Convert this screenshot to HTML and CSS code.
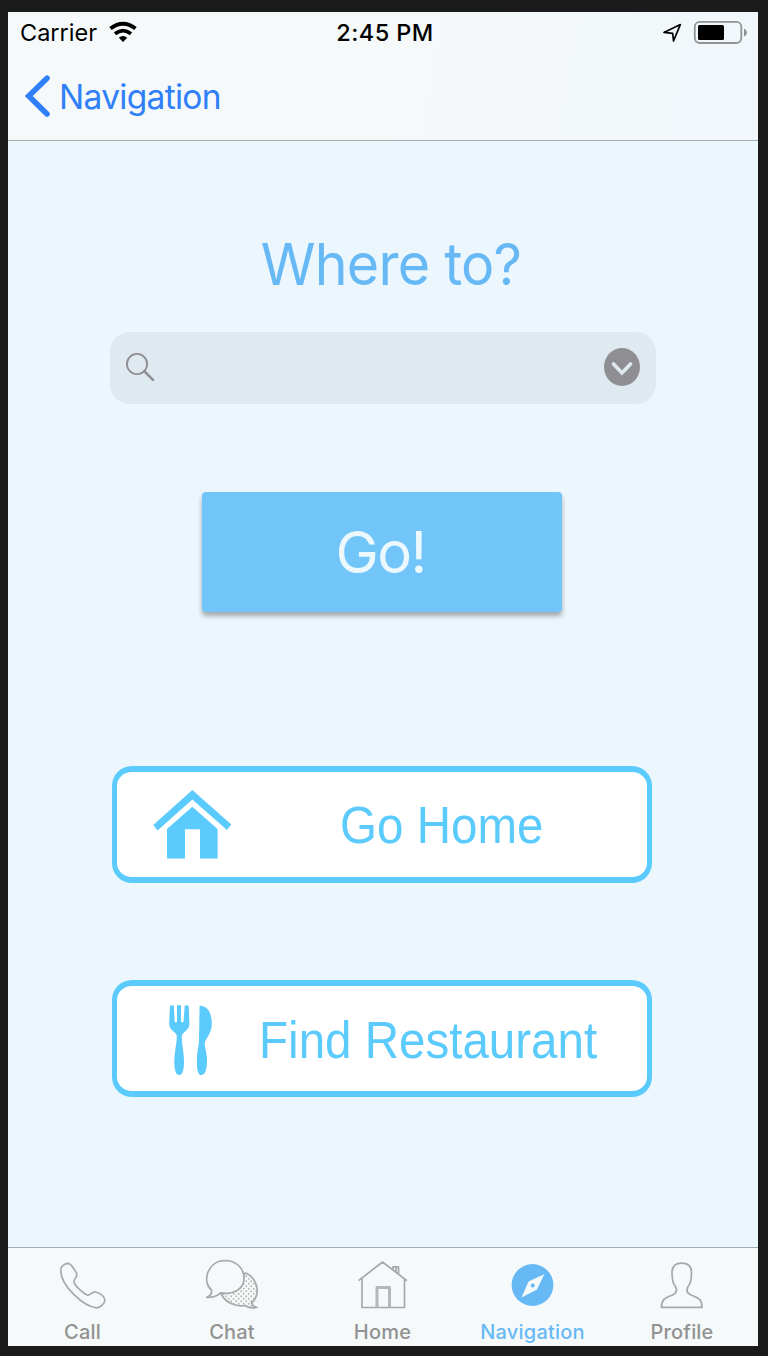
FILE: index.html
```html
<!DOCTYPE html>
<html lang="en">
<head>
<meta charset="utf-8">
<title>Navigation</title>
<link rel="stylesheet" href="styles.css">
</head>
<body>
<div class="phone">
  <header class="top">
    <div class="status">
      <div class="status-left">
        <span class="carrier">Carrier</span>
        <svg class="wifi" viewBox="108 20 30 24" width="30" height="24">
          <path d="M110.500 28.500Q123 19 135.500 28.500" fill="none" stroke="#000" stroke-width="4"/>
          <path d="M115 33.800Q123 27.500 131 33.800" fill="none" stroke="#000" stroke-width="3.800"/>
          <path d="M123 42L118.800 37.700Q123 34.300 127.200 37.700Z"/>
        </svg>
      </div>
      <span class="time">2:45 PM</span>
      <div class="status-right">
        <svg viewBox="660 18 92 28" width="92" height="28">
          <path d="M664 32.400L680.300 24.600L673.500 41L672.700 33.400Z" fill="none" stroke="#000" stroke-width="1.700" stroke-linejoin="round"/>
          <rect x="694.800" y="21.800" width="46.500" height="21.200" rx="5" fill="none" stroke="#8f9394" stroke-width="1.800"/>
          <rect x="698" y="25" width="26" height="15" rx="1.500"/>
          <path d="M744 28.500Q747 30 747 32.500Q747 35 744 36.500Z" fill="#8f9394"/>
        </svg>
      </div>
    </div>
    <nav class="navbar">
      <svg viewBox="22 70 32 52" width="32" height="52">
        <path d="M47 78.200L28.800 96L47 114" fill="none" stroke="#2f7ff8" stroke-width="5.600" stroke-linecap="round"/>
      </svg>
      <span class="back">Navigation</span>
    </nav>
  </header>

  <main class="content">
    <h1 class="title"><span>Where to?</span></h1>
    <div class="search">
      <svg viewBox="124 350 34 34" width="34" height="34">
        <circle cx="137" cy="364" r="10.100" fill="none" stroke="#8e8e93" stroke-width="1.900"/>
        <path d="M144.500 371.300L153 379.800" stroke="#8e8e93" stroke-width="2.600" stroke-linecap="round"/>
      </svg>
      <svg viewBox="603 347 38 40" width="38" height="40">
        <ellipse cx="622" cy="367" rx="18" ry="19" fill="#8e8e93"/>
        <path d="M613.500 364L622 373L630.500 364" fill="none" stroke="#dfeaf0" stroke-width="3.600" stroke-linecap="round"/>
      </svg>
    </div>
    <button class="go"><span>Go!</span></button>
    <button class="card home-card">
      <svg viewBox="150 786 84 76" width="84" height="76" fill="#5bcafc">
        <path d="M192.300 790L231.300 824.500L227 830L192.300 799.500L157.500 830.500L153.300 825Z"/>
        <path d="M192.300 806.800L217.600 829V858.500H200V829.200H185V858.500H167V829Z"/>
      </svg>
      <span>Go Home</span>
    </button>
    <button class="card food-card">
      <svg viewBox="165 1001 52 78" width="52" height="78" fill="#5bcafc">
        <path d="M170 1005.500H173.800L174.600 1021.500Q175.800 1023.500 177 1021.500V1005.300H181V1021.500Q182.300 1023.500 183.600 1021.500L184.700 1005.500H188.700L189.400 1024C189 1031 182.500 1031.500 181.800 1036C181.500 1043 184 1052 184 1061C184 1069 183 1075 179.300 1075C175.500 1075 174.300 1069 174.300 1061C174.300 1052 177 1043 176.800 1036C176 1031.500 169.800 1031 169.200 1024Z"/>
        <path d="M199.600 1005.800C208 1005.500 212 1014 211.800 1024C211.800 1033 205.500 1039 204.700 1043C204.500 1047 207 1052 207 1060C207 1069 205.300 1075 201.300 1075C197.800 1075 196.600 1069 197 1060C197 1051 198.800 1047 199 1040Z"/>
      </svg>
      <span>Find Restaurant</span>
    </button>
  </main>

  <footer class="tabs">
    <div class="tab">
      <svg viewBox="8 1250 150 70" width="150" height="70">
        <path d="M61.200 1267.500Q64 1263.500 68.500 1263.300C71 1263.500 73.500 1268 76.500 1273C78 1277 73.500 1279 74 1282C75 1286 83 1293.500 87.500 1295.200C90.500 1295.800 92 1291 96 1292C100 1293.500 104.500 1296.500 105 1300C104.500 1304 100 1308 96.500 1307.800C84 1307 61 1286 60.800 1271Z"/>
      </svg>
      <span class="label">Call</span>
    </div>
    <div class="tab">
      <svg viewBox="158 1250 150 70" width="150" height="70">
        <defs>
          <pattern id="dots" width="5" height="5" patternUnits="userSpaceOnUse">
            <circle cx="1.200" cy="1.200" r=".95" class="dot"/>
            <circle cx="3.700" cy="3.700" r=".95" class="dot"/>
          </pattern>
        </defs>
        <path class="dotted" fill="url(#dots)" d="M245.500 1273C253 1276 257.500 1284 257.200 1291C257 1297 254.500 1300.500 251.500 1303Q252.500 1306 257 1307.500Q250 1309 245 1305.500C236 1307 226 1303 221.500 1294.500Z"/>
        <path class="bubble" d="M206.700 1297.300Q212.500 1295 211.500 1290C202 1283 206.500 1261 225 1260.500C236 1260.500 244 1268 244 1278C244 1289 234 1295 220.500 1292.800Q215 1298 206.700 1297.300Z"/>
      </svg>
      <span class="label left">Chat</span>
    </div>
    <div class="tab">
      <svg viewBox="308 1250 150 70" width="150" height="70">
        <path d="M358.500 1280.700L382.500 1262L407 1280.700M362 1278.500V1307.500H404.500V1278.500M393 1269.500V1266.800H398.500V1273.500M396 1267V1271.500"/>
        <path class="door" d="M377 1307.500V1287.500H389.500V1307.500"/>
      </svg>
      <span class="label">Home</span>
    </div>
    <div class="tab active">
      <svg viewBox="458 1250 150 70" width="150" height="70">
        <circle cx="532.500" cy="1285" r="20.900" class="disc"/>
        <path class="needle" d="M544.300 1274.300L537 1289.500L521.500 1297.500L528.500 1281.500Z"/>
        <circle cx="532.700" cy="1285.500" r="2" class="disc"/>
      </svg>
      <span class="label">Navigation</span>
    </div>
    <div class="tab">
      <svg viewBox="608 1250 150 70" width="150" height="70">
        <path d="M661.500 1307.300C661.500 1297.500 667.500 1297.500 673.500 1294.500C678 1292 676.500 1288.500 675.500 1286.500C673.500 1284.500 672 1280 672 1272.500C672 1266 676 1263.200 681.700 1263.200C687.500 1263.200 691.500 1266 691.500 1272.500C691.500 1280 690 1284.500 688 1286.500C687 1288.500 685.500 1292 690 1294.500C696 1297.500 702 1297.500 702 1307.300Z"/>
      </svg>
      <span class="label left">Profile</span>
    </div>
  </footer>
</div>
</body>
</html>
```
FILE: styles.css
```css
* { box-sizing: border-box; }
body {
  margin: 0;
  background: #1b1b1b;
  font-family: Inter, "Liberation Sans", sans-serif;
}
svg { display: block; flex: none; }
span { white-space: nowrap; }
button { border: 0; margin: 0; padding: 0; font: inherit; }
.phone {
  width: 750px;
  height: 1334px;
  margin: 12px 10px 10px 8px;
  background: #ecf7fd;
  display: flex;
  flex-direction: column;
}
.top {
  height: 129px;
  border-bottom: 1px solid #a5abaf;
  background: linear-gradient(100deg, #f6f9fa 50%, #f1f7fa 90%);
}
.status {
  height: 40px;
  display: grid;
  grid-template-columns: 1fr auto 1fr;
  align-items: center;
  font-size: 24px;
}
.status-left { display: flex; align-items: center; padding-left: 12px; }
.carrier { width: 88px; font-size: 23.5px; }
.time { font-weight: 500; letter-spacing: 0.45px; font-size: 23.5px; padding-left: 4px; }
.status-right { display: flex; justify-content: flex-end; padding-right: 6px; }
.navbar {
  height: 88px;
  display: flex;
  align-items: center;
  padding-left: 14px;
  color: #2f7ff8;
  font-size: 33.5px;
}
.back { padding: 1px 0 0 5px; letter-spacing: -0.7px; }
.content { flex: 1; display: flex; flex-direction: column; align-items: center; }
.title {
  margin: 87px 0 0 16px;
  height: 72px;
  line-height: 72px;
  font-size: 58px;
  font-weight: 400;
  color: #67b9f6;
  letter-spacing: -0.8px;
}
.title span { display: inline-block; transform: scaleX(.958); }
.search {
  width: 546px;
  height: 72px;
  margin-top: 32px;
  border-radius: 20px;
  background: #dfeaf0;
  display: flex;
  justify-content: space-between;
  align-items: center;
  padding: 0 15px 2px 14px;
}
.go {
  width: 360px;
  height: 120px;
  margin: 88px 2px 0 0;
  padding-right: 3px;
  border-radius: 4px;
  background: #72c5f8;
  box-shadow: 0 4px 5px rgba(0, 0, 0, .32);
  color: #ebf8fd;
  font-size: 58px;
  font-weight: 400;
  letter-spacing: -1.5px;
}
.card {
  width: 540px;
  height: 117px;
  border: 6px solid #5bcafc;
  border-width: 6px 5px;
  border-radius: 20px;
  background: #fff;
  color: #5bcafc;
  font: 52px "Liberation Sans", Arial, sans-serif;
  display: flex;
  align-items: center;
}
.card span { transform: scaleX(.914); transform-origin: 0 50%; }
.home-card { margin: 154px 2px 0 0; padding: 0 0 1px 33px; }
.home-card span { padding: 2px 0 0 116px; }
.food-card { margin: 97px 2px 0 0; padding: 3px 0 0 48px; }
.food-card span { padding-left: 46px; }
.tabs {
  height: 99px;
  border-top: 1px solid #9daeb1;
  background: #f5f9fa;
  display: grid;
  grid-template-columns: repeat(5, 150px);
}
.tab {
  display: flex;
  flex-direction: column;
  align-items: center;
  padding-top: 2px;
  color: #929292;
  font-size: 20px;
  line-height: 24px;
  font-weight: 500;
  letter-spacing: 0.2px;
}
.label { padding-right: 1px; }
.left { padding-right: 2px; }
.tab path { stroke: #a6a9a9; stroke-width: 1.7; stroke-linejoin: round; }
.tab path:not(.dotted) { fill: none; }
.tab path.bubble { fill: #f5f9fa; }
.tab path.door { stroke: #b4b8b8; stroke-width: 3; }
.dot { fill: #b3b5b5; }
.active { color: #67b9f6; }
.disc { fill: #67b9f6; }
.tab path.needle { fill: #f5f9fa; stroke: none; }
```
